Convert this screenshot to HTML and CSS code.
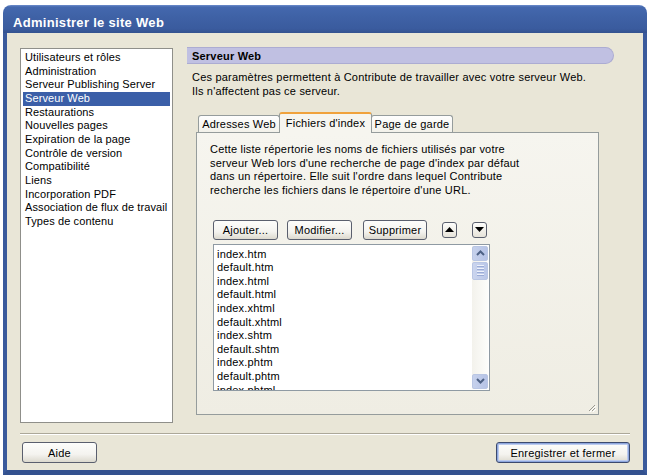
FILE: index.html
```html
<!DOCTYPE html>
<html>
<head>
  <title>Administrer le site Web</title>
  <link rel="stylesheet" href="styles.css">
</head>
<body>
  <div class="window">
    <div class="titlebar">Administrer le site Web</div>
    <div class="client">
      <div class="main">
        <ul class="nav">
          <li>Utilisateurs et rôles</li>
          <li>Administration</li>
          <li>Serveur Publishing Server</li>
          <li class="selected">Serveur Web</li>
          <li>Restaurations</li>
          <li>Nouvelles pages</li>
          <li>Expiration de la page</li>
          <li>Contrôle de version</li>
          <li>Compatibilité</li>
          <li>Liens</li>
          <li>Incorporation PDF</li>
          <li>Association de flux de travail</li>
          <li>Types de contenu</li>
        </ul>

        <div class="pane">
          <div class="pane-head">Serveur Web</div>
          <p class="pane-desc">Ces paramètres permettent à Contribute de travailler avec votre serveur Web.<br>Ils n'affectent pas ce serveur.</p>

          <div class="tabs">
            <div class="tab tab-first">Adresses Web</div>
            <div class="tab active">Fichiers d'index</div>
            <div class="tab">Page de garde</div>
          </div>

          <div class="tab-panel">
            <p class="panel-desc">Cette liste répertorie les noms de fichiers utilisés par votre<br>serveur Web lors d'une recherche de page d'index par défaut<br>dans un répertoire. Elle suit l'ordre dans lequel Contribute<br>recherche les fichiers dans le répertoire d'une URL.</p>

            <div class="toolbar">
              <button class="btn btn-add">Ajouter...</button>
              <button class="btn btn-edit">Modifier...</button>
              <button class="btn btn-del">Supprimer</button>
              <button class="btn-arrow btn-up">
                <svg width="9" height="5" viewBox="0 0 9 5"><path d="M0 5 L4.5 0 L9 5 Z" fill="#000"/></svg>
              </button>
              <button class="btn-arrow">
                <svg width="9" height="5" viewBox="0 0 9 5"><path d="M0 0 L4.5 5 L9 0 Z" fill="#000"/></svg>
              </button>
            </div>

            <div class="listbox">
              <ul class="files">
                <li>index.htm</li>
                <li>default.htm</li>
                <li>index.html</li>
                <li>default.html</li>
                <li>index.xhtml</li>
                <li>default.xhtml</li>
                <li>index.shtm</li>
                <li>default.shtm</li>
                <li>index.phtm</li>
                <li>default.phtm</li>
                <li>index.phtml</li>
              </ul>
              <div class="scrollbar">
                <div class="sb-btn">
                  <svg width="9" height="6" viewBox="0 0 9 6"><path d="M1 5 L4.5 1.5 L8 5" fill="none" stroke="#4d6185" stroke-width="2"/></svg>
                </div>
                <div class="sb-thumb">
                  <span></span><span></span><span></span><span></span>
                </div>
                <div class="sb-track"></div>
                <div class="sb-btn">
                  <svg width="9" height="6" viewBox="0 0 9 6"><path d="M1 1 L4.5 4.5 L8 1" fill="none" stroke="#4d6185" stroke-width="2"/></svg>
                </div>
              </div>
            </div>

            <svg class="grip" width="9" height="9" viewBox="0 0 9 9">
              <path d="M8 2 L2 8 M8 5 L5 8" stroke="#9b9a90" stroke-width="1"/>
              <path d="M9 3 L3 9 M9 6 L6 9" stroke="#fff" stroke-width="1"/>
            </svg>
          </div>
        </div>
      </div>

      <div class="separator"></div>

      <div class="footer">
        <button class="btn btn-help">Aide</button>
        <button class="btn btn-default">Enregistrer et fermer</button>
      </div>
    </div>
  </div>
</body>
</html>
```

FILE: styles.css
```css
body {
  margin: 0;
  background-color: #fff;
  font-family: "Liberation Sans", Arial, sans-serif;
  font-size: 11px;
  letter-spacing: 0.2px;
  color: #000;
}

.window {
  width: 644px;
  height: 470px;
  margin: 5px 0 0 3px;
  display: flex;
  flex-direction: column;
}

.titlebar {
  height: 22px;
  padding: 6px 0 0 10px;
  border-radius: 8px 8px 0 0;
  background: linear-gradient(#6d8dcc 0, #4468ae 2px, #3f62a6 40%, #3a5b9e 85%, #34528f 100%);
  color: #fff;
  font-size: 13px;
  font-weight: bold;
  line-height: 23px;
  letter-spacing: 0.3px;
}

.client {
  flex: 1;
  background-color: #e9e6d7;
  border-left: 4px solid #3a5a9c;
  border-right: 4px solid #3a5a9c;
  border-bottom: 5px solid #33518f;
  display: flex;
  flex-direction: column;
}

.main {
  display: flex;
  gap: 14px;
  padding: 15px 0 0 13px;
}

/* left navigation list */

.nav {
  width: 147px;
  height: 371px;
  margin: 0;
  padding: 2px 2px 0 2px;
  list-style: none;
  background-color: #fff;
  border: 1px solid #8f8f8a;
  letter-spacing: 0.1px;
}

.nav li {
  height: 13.67px;
  line-height: 13.67px;
  padding-left: 2px;
  white-space: nowrap;
}

.nav li.selected {
  background-color: #3b5fa8;
  color: #fff;
}

/* right pane */

.pane {
  width: 427px;
}

.pane-head {
  height: 17px;
  margin-top: -1px;
  padding-left: 5px;
  line-height: 17px;
  font-weight: bold;
  background-color: #c0c0e2;
  border: 1px solid #acacd2;
  border-left: none;
  border-radius: 0 9px 9px 0;
  box-sizing: border-box;
}

.pane-desc {
  margin: 6px 0 0 5px;
  line-height: 14px;
}

.tabs {
  display: flex;
  align-items: flex-end;
  height: 20px;
  margin: 14px 0 0 11px;
  position: relative;
  z-index: 1;
}

.tab {
  height: 16px;
  line-height: 17px;
  text-align: center;
  border: 1px solid #959c9c;
  border-bottom: none;
  border-radius: 3px 3px 0 0;
  background: linear-gradient(#fefefe, #f2f1ea);
  margin-left: -1px;
}

.tab-first {
  width: 80px;
  margin-left: 0;
}

.tab.active {
  width: 91px;
  height: 19px;
  line-height: 18px;
  border-top: 2px solid #f0a23c;
  background: #f6f5ef;
  margin-bottom: -1px;
  position: relative;
}

.tab:last-child {
  width: 80px;
}

.tab-panel {
  width: 388px;
  height: 271px;
  margin-left: 9px;
  padding: 10px 0 0 13px;
  border: 1px solid #959c9c;
  background: linear-gradient(#f6f5ef, #efede3);
  display: flex;
  flex-direction: column;
}

.panel-desc {
  margin: 0;
  line-height: 13.67px;
}

.toolbar {
  display: flex;
  align-items: center;
  margin: 22px 0 0 3px;
  height: 20px;
}

.btn {
  height: 20px;
  padding: 0;
  font-family: "Liberation Sans", Arial, sans-serif;
  font-size: 11px;
  letter-spacing: 0.2px;
  color: #000;
  border: 1px solid #5a5f6e;
  border-radius: 3px;
  background: linear-gradient(#fdfdfb 0, #f4f3ef 60%, #dcd9ce 100%);
}

.btn-add {
  width: 65px;
}

.btn-edit {
  width: 65px;
  margin-left: 9px;
}

.btn-del {
  width: 64px;
  margin-left: 11px;
}

.btn-arrow {
  width: 15px;
  height: 16px;
  margin-left: 15px;
  padding: 0;
  border: 1px solid #5a5f6e;
  border-radius: 3px;
  background: linear-gradient(#fdfdfb, #e6e3d9);
  display: flex;
  align-items: center;
  justify-content: center;
}

.listbox {
  width: 275px;
  height: 145px;
  margin: 4px 0 0 3px;
  border: 1px solid #8f9aa3;
  background-color: #fff;
  display: flex;
  overflow: hidden;
}

.files {
  flex: 1;
  margin: 0;
  padding: 3px 0 0 3px;
  list-style: none;
}

.files li {
  height: 13.6px;
  line-height: 13.6px;
}

/* scrollbar */

.scrollbar {
  width: 16px;
  margin: 1px 1px 1px 0;
  display: flex;
  flex-direction: column;
  background: linear-gradient(90deg, #f3f2ec, #fdfdfb);
}

.sb-btn {
  height: 15px;
  border: 1px solid #b9c6e4;
  border-radius: 2px;
  box-sizing: border-box;
  background: linear-gradient(90deg, #c6d1ec, #b6c3e6);
  display: flex;
  align-items: center;
  justify-content: center;
}

.sb-thumb {
  height: 18px;
  margin-top: 1px;
  border: 1px solid #b9c6e4;
  border-radius: 2px;
  box-sizing: border-box;
  background: linear-gradient(90deg, #cbd5ee, #bac7e8);
  display: flex;
  flex-direction: column;
  align-items: center;
  justify-content: center;
  gap: 1px;
}

.sb-thumb span {
  width: 7px;
  height: 1px;
  background-color: #eef2fb;
  border-bottom: 1px solid #9aabd6;
}

.sb-track {
  flex: 1;
}

.grip {
  margin-top: auto;
  margin-bottom: 2px;
  margin-right: 2px;
  align-self: flex-end;
}

/* footer */

.separator {
  height: 0;
  margin: 10px 13px 0 13px;
  border-top: 1px solid #aca899;
  border-bottom: 1px solid #fff;
}

.footer {
  display: flex;
  justify-content: space-between;
  padding: 7px 13px 0 15px;
}

.footer .btn {
  height: 21px;
}

.btn-help {
  width: 75px;
}

.btn-default {
  width: 134px;
  border-color: #3c4a6e;
  box-shadow: inset 0 0 0 1px #8ea7de, inset 0 0 0 2px #bccbee;
}
```
